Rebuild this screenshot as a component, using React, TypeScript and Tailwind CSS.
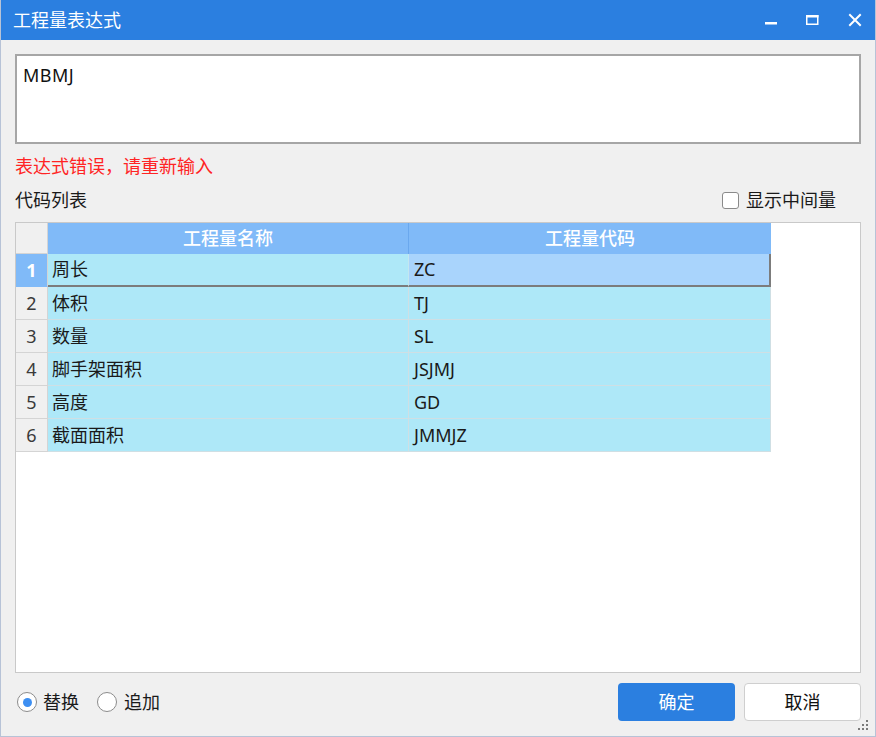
import React from "react";

const FONT = { fontFamily: '"Noto Sans", "Noto Sans CJK SC", sans-serif' };

const rows = [
  ["周长", "ZC"],
  ["体积", "TJ"],
  ["数量", "SL"],
  ["脚手架面积", "JSJMJ"],
  ["高度", "GD"],
  ["截面面积", "JMMJZ"],
];

export default function App() {
  return (
    <div
      className="relative w-[876px] h-[737px] flex flex-col bg-[#f0f0f0] border-x border-b border-[#b7c3d7] text-[#1a1a1a] overflow-hidden"
      style={FONT}
    >
      {/* Title bar */}
      <div className="h-[40px] shrink-0 bg-[#2b7fe0] flex items-center pl-[13px] -mx-px">
        <span className="text-white text-[18px] leading-none">工程量表达式</span>
        <div className="ml-auto flex items-center h-full">
          <svg width="14" height="14" viewBox="0 0 14 14" className="mr-[27px]">
            <rect x="1" y="9" width="12" height="2.5" fill="white" />
          </svg>
          <svg width="14" height="14" viewBox="0 0 14 14" className="mr-[29px]">
            <rect x="1.75" y="2.75" width="11" height="8.5" fill="none" stroke="white" strokeWidth="1.5" />
            <rect x="1" y="2" width="12.5" height="2.5" fill="white" />
          </svg>
          <svg width="14" height="14" viewBox="0 0 14 14" className="mr-[14px]">
            <path d="M2 2 L12 12 M12 2 L2 12" stroke="white" strokeWidth="2" strokeLinecap="square" />
          </svg>
        </div>
      </div>

      {/* Body */}
      <div className="flex-1 flex flex-col px-[14px] pt-[14px] pb-[15px] min-h-0">
        <div className="h-[90px] shrink-0 bg-white border-2 border-[#a6a6a6] px-[6px] pt-[7px]">
          <span className="text-[18px] leading-[24px] tracking-[0.5px] text-[#111]">MBMJ</span>
        </div>

        <div className="mt-[10px] h-[24px] text-[18px] leading-[24px] text-[#ff2424]">
          表达式错误，请重新输入
        </div>

        <div className="mt-[10px] h-[24px] flex items-center pr-[25px]">
          <span className="text-[18px] leading-[24px] text-[#1a1a1a]">代码列表</span>
          <label className="ml-auto flex items-center">
            <span className="w-[17px] h-[17px] rounded-[3px] border border-[#8a8a8a] bg-white mr-[7px]" />
            <span className="text-[18px] leading-[24px] text-[#1a1a1a]">显示中间量</span>
          </label>
        </div>

        {/* Table */}
        <div className="mt-[10px] flex-1 min-h-0 bg-white border border-[#c9c9c9]">
          <div className="flex h-[31px] text-[18px]">
            <div className="w-[32px] bg-[#f0f0f0] border-r border-b border-[#d4d4d4]" />
            <div className="w-[361px] bg-[#80baf8] border-r border-[#6aa8ee] flex items-center justify-center text-white font-medium">
              工程量名称
            </div>
            <div className="w-[362px] bg-[#80baf8] flex items-center justify-center text-white font-medium">
              工程量代码
            </div>
          </div>
          {rows.map(([name, code], i) => {
            const sel = i === 0;
            return (
              <div key={i} className="flex h-[33px] text-[18px]">
                <div
                  className={
                    sel
                      ? "w-[32px] bg-[#80baf8] border-r border-[#d4d4d4] border-b border-b-[#80baf8] flex items-center justify-center text-white font-bold"
                      : "w-[32px] bg-[#f0f0f0] border-r border-b border-[#d4d4d4] flex items-center justify-center text-[#3a3a3a]"
                  }
                >
                  {i + 1}
                </div>
                <div
                  className={
                    sel
                      ? "w-[361px] bg-[#aee8f8] border-r border-[#c4e6f0] border-b-2 border-b-[#7c7c7c] flex items-center pl-[4px]"
                      : "w-[361px] bg-[#aee8f8] border-r border-b border-[#cfdfe4] flex items-center pl-[4px]"
                  }
                >
                  {name}
                </div>
                <div
                  className={
                    sel
                      ? "w-[362px] bg-[#a9d4fc] border-r-2 border-[#7c7c7c] border-b-2 flex items-center pl-[5px]"
                      : "w-[362px] bg-[#aee8f8] border-r border-b border-[#cfdfe4] flex items-center pl-[5px]"
                  }
                >
                  {code}
                </div>
              </div>
            );
          })}
        </div>

        {/* Bottom bar */}
        <div className="mt-[10px] h-[38px] shrink-0 flex items-center">
          <label className="flex items-center ml-[2px]">
            <span className="w-[20px] h-[20px] rounded-full border border-[#8c8c8c] bg-white flex items-center justify-center">
              <span className="w-[9px] h-[9px] rounded-full bg-[#3d8ff2]" />
            </span>
            <span className="ml-[6px] text-[18px] leading-[24px]">替换</span>
          </label>
          <label className="flex items-center ml-[18px]">
            <span className="w-[20px] h-[20px] rounded-full border border-[#8c8c8c] bg-white" />
            <span className="ml-[7px] text-[18px] leading-[24px]">追加</span>
          </label>
          <button className="ml-auto w-[117px] h-[38px] rounded-[4px] bg-[#2b7fe0] text-white text-[18px]">
            确定
          </button>
          <button className="ml-[9px] w-[117px] h-[38px] rounded-[4px] bg-white border border-[#cfcfcf] text-[#111] text-[18px]">
            取消
          </button>
        </div>
      </div>

      {/* Resize grip */}
      <div className="absolute right-[6px] bottom-[5px] w-[11px] h-[11px]">
        <svg width="11" height="11" viewBox="0 0 11 11">
          <rect x="8" y="0" width="2" height="2" fill="#7a7a7a" />
          <rect x="4" y="4" width="2" height="2" fill="#7a7a7a" />
          <rect x="8" y="4" width="2" height="2" fill="#7a7a7a" />
          <rect x="0" y="8" width="2" height="2" fill="#7a7a7a" />
          <rect x="4" y="8" width="2" height="2" fill="#7a7a7a" />
          <rect x="8" y="8" width="2" height="2" fill="#7a7a7a" />
        </svg>
      </div>
    </div>
  );
}
